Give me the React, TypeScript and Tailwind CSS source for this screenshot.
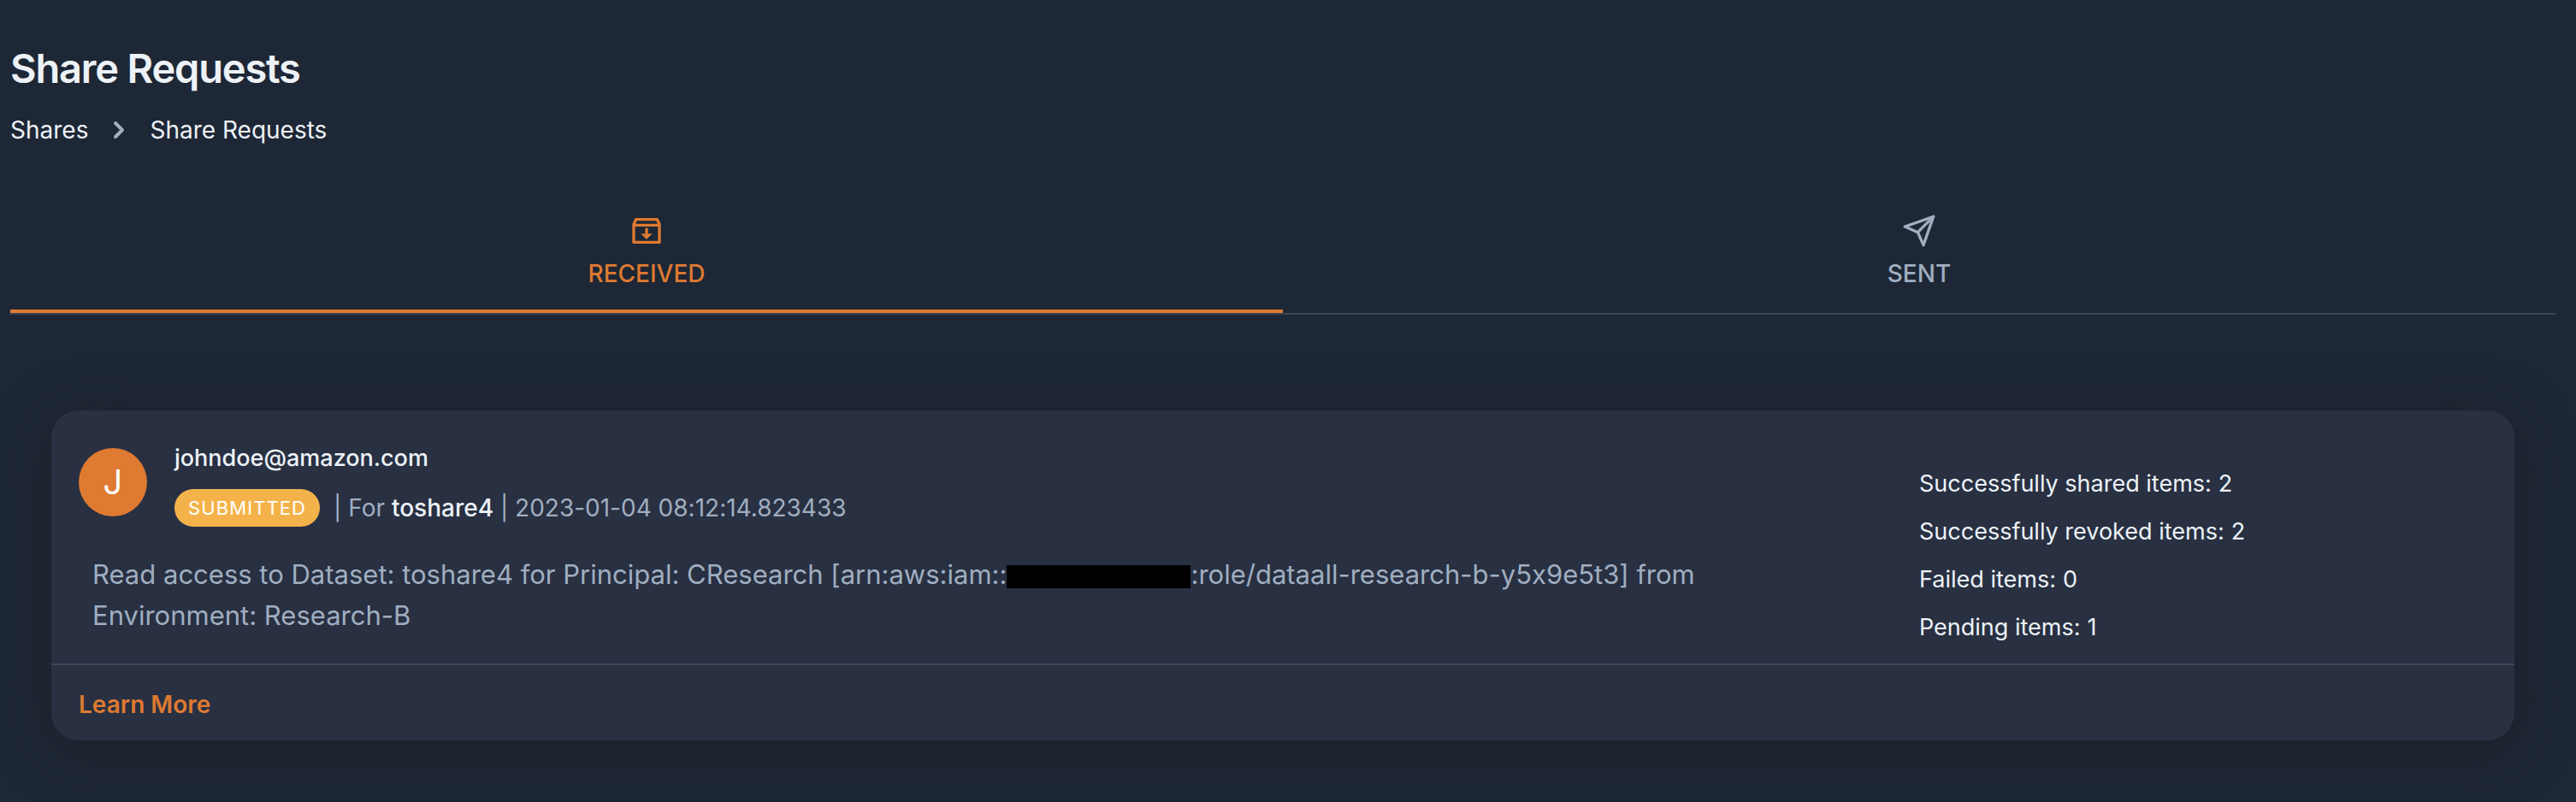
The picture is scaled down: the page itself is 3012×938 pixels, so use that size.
import { FiSend } from "react-icons/fi";
import { HiChevronRight } from "react-icons/hi";
import { RiInboxArchiveLine } from "react-icons/ri";

const stats = [
  { label: "Successfully shared items", value: 2 },
  { label: "Successfully revoked items", value: 2 },
  { label: "Failed items", value: 0 },
  { label: "Pending items", value: 1 },
];

function Header() {
  return (
    <header className="flex flex-col gap-[22px]">
      <h1 className="text-[47px] leading-[56px] font-semibold tracking-tight">Share Requests</h1>
      <nav aria-label="Breadcrumb" className="flex items-center text-[28px] leading-[44px]">
        <a href="#shares">Shares</a>
        <HiChevronRight className="mx-4 size-10 text-[#a0aec0]" aria-hidden="true" />
        <a href="#share-requests">Share Requests</a>
      </nav>
    </header>
  );
}

function Tabs() {
  return (
    <div
      role="tablist"
      className="mt-[54px] grid grid-cols-2 border-b-2 border-[#3c4553] text-[28px] leading-[44px] font-medium"
    >
      <button
        type="button"
        role="tab"
        aria-selected="true"
        className="flex flex-col items-center gap-2 border-b-4 border-[#de7a31] pt-[22px] pb-5 text-[#de7a31]"
      >
        <RiInboxArchiveLine className="size-10" aria-hidden="true" />
        RECEIVED
      </button>
      <button
        type="button"
        role="tab"
        aria-selected="false"
        className="flex flex-col items-center gap-2 border-b-4 border-transparent pt-[22px] pb-5 text-[#a0aec0]"
      >
        <FiSend className="size-10" aria-hidden="true" />
        SENT
      </button>
    </div>
  );
}

function RequestCard() {
  return (
    <article className="mx-12 mt-28 rounded-[32px] bg-[#283042] shadow-[0_12px_70px_rgba(22,24,28,0.4)]">
      <div className="grid grid-cols-4">
        <div className="col-span-3 pt-[34px] pb-8 pl-8">
          <div className="flex gap-8">
            <div className="mt-[10px] flex size-20 items-center justify-center rounded-full bg-[#de7a31] text-[40px] text-white">
              J
            </div>
            <div className="leading-[44px]">
              <p className="text-[27px] font-medium">johndoe@amazon.com</p>
              <div className="mt-[14px] flex items-center gap-4 text-[28px] text-[#a0aec0]">
                <span className="rounded-full bg-[#f4b34a] px-4 text-[22px] tracking-wider text-white">
                  SUBMITTED
                </span>
                <p>
                  | For <strong className="font-medium text-[#edf2f7]">toshare4</strong> | 2023-01-04
                  08:12:14.823433
                </p>
              </div>
            </div>
          </div>
          <p className="mt-8 pr-16 pl-4 text-[31px] leading-[48px] text-[#a0aec0]">
            Read access to Dataset: toshare4 for Principal: CResearch [arn:aws:iam::
            <span className="inline-block h-[27px] w-[215px] bg-black align-[-5px]" />
            <span>:role/dataall-research-b-y5x9e5t3] from</span>{" "}
            <span className="whitespace-nowrap">Environment: Research-B</span>
          </p>
        </div>
        <dl className="flex flex-col gap-3 pt-16 pl-6 text-[27px] leading-[44px]">
          {stats.map((s) => (
            <div key={s.label} className="flex gap-2">
              <dt>{s.label}:</dt>
              <dd>{s.value}</dd>
            </div>
          ))}
        </dl>
      </div>
      <div className="border-t-2 border-[#3f495a] px-8 pt-6 pb-5 text-[28px] leading-[44px]">
        <a href="#learn-more" className="font-semibold text-[#de7a31]">
          Learn More
        </a>
      </div>
    </article>
  );
}

export default function App() {
  return (
    <main className="min-h-screen bg-[#1e2735] pt-[52px] pr-6 pb-16 pl-3 font-[Inter,'Liberation_Sans',sans-serif] text-[#edf2f7] [font-variant-ligatures:no-contextual]">
      <Header />
      <Tabs />
      <RequestCard />
    </main>
  );
}
